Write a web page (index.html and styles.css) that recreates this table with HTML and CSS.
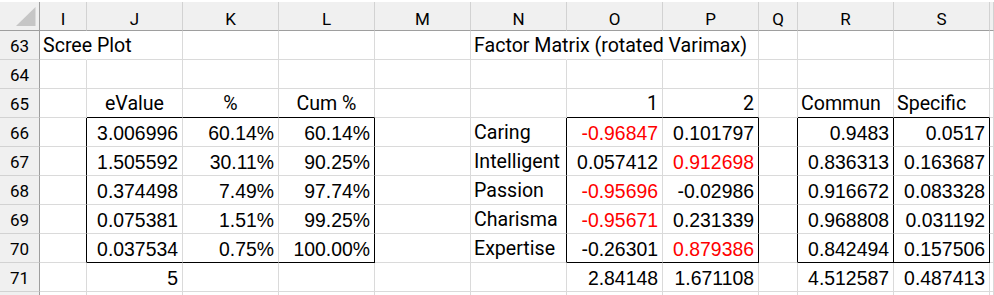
FILE: index.html
```html
<!DOCTYPE html>
<html>
<head>
<meta charset="utf-8">
<link rel="stylesheet" href="styles.css">
</head>
<body>
<div class="sheet">
  <div class="ch corner"><svg class="tri" width="20" height="20" viewBox="0 0 20 20"><polygon points="19.5,0 19.5,19 0,19" fill="#c6c6c6"/></svg></div>
  <div class="ch">I</div><div class="ch">J</div><div class="ch">K</div><div class="ch">L</div><div class="ch">M</div><div class="ch">N</div><div class="ch">O</div><div class="ch">P</div><div class="ch">Q</div><div class="ch">R</div><div class="ch">S</div><div class="ch"></div>

  <div class="rh">63</div>
  <div class="c lbl nr">Scree Plot</div><div class="c"></div><div class="c"></div><div class="c"></div><div class="c"></div>
  <div class="c lbl nr">Factor Matrix (rotated Varimax)</div><div class="c nr"></div><div class="c"></div><div class="c"></div><div class="c"></div><div class="c"></div><div class="c"></div>

  <div class="rh">64</div>
  <div class="c"></div><div class="c"></div><div class="c"></div><div class="c"></div><div class="c"></div><div class="c"></div><div class="c"></div><div class="c"></div><div class="c"></div><div class="c"></div><div class="c"></div><div class="c"></div>

  <div class="rh">65</div>
  <div class="c"></div><div class="c lbl ctr bB">eValue</div><div class="c lbl ctr bB">%</div><div class="c lbl ctr bB">Cum %</div><div class="c"></div><div class="c"></div>
  <div class="c lbl rt bB">1</div><div class="c lbl rt bB">2</div><div class="c"></div><div class="c lbl bB">Commun</div><div class="c lbl bB">Specific</div><div class="c"></div>

  <div class="rh">66</div>
  <div class="c bR"></div><div class="c num">3.006996</div><div class="c num">60.14%</div><div class="c num bR">60.14%</div><div class="c"></div>
  <div class="c lbl bR">Caring</div><div class="c num red">-0.96847</div><div class="c num bR">0.101797</div><div class="c bR"></div><div class="c num bR">0.9483</div><div class="c num bR">0.0517</div><div class="c"></div>

  <div class="rh">67</div>
  <div class="c bR"></div><div class="c num">1.505592</div><div class="c num">30.11%</div><div class="c num bR">90.25%</div><div class="c"></div>
  <div class="c lbl bR">Intelligent</div><div class="c num">0.057412</div><div class="c num red bR">0.912698</div><div class="c bR"></div><div class="c num bR">0.836313</div><div class="c num bR">0.163687</div><div class="c"></div>

  <div class="rh">68</div>
  <div class="c bR"></div><div class="c num">0.374498</div><div class="c num">7.49%</div><div class="c num bR">97.74%</div><div class="c"></div>
  <div class="c lbl bR">Passion</div><div class="c num red">-0.95696</div><div class="c num bR">-0.02986</div><div class="c bR"></div><div class="c num bR">0.916672</div><div class="c num bR">0.083328</div><div class="c"></div>

  <div class="rh">69</div>
  <div class="c bR"></div><div class="c num">0.075381</div><div class="c num">1.51%</div><div class="c num bR">99.25%</div><div class="c"></div>
  <div class="c lbl bR">Charisma</div><div class="c num red">-0.95671</div><div class="c num bR">0.231339</div><div class="c bR"></div><div class="c num bR">0.968808</div><div class="c num bR">0.031192</div><div class="c"></div>

  <div class="rh">70</div>
  <div class="c bR"></div><div class="c num bB">0.037534</div><div class="c num bB">0.75%</div><div class="c num bR bB">100.00%</div><div class="c"></div>
  <div class="c lbl bR">Expertise</div><div class="c num bB">-0.26301</div><div class="c num red bR bB">0.879386</div><div class="c bR"></div><div class="c num bR bB">0.842494</div><div class="c num bR bB">0.157506</div><div class="c"></div>

  <div class="rh">71</div>
  <div class="c"></div><div class="c num">5</div><div class="c"></div><div class="c"></div><div class="c"></div><div class="c"></div>
  <div class="c num">2.84148</div><div class="c num">1.671108</div><div class="c"></div><div class="c num">4.512587</div><div class="c num">0.487413</div><div class="c"></div>

  <div class="rh"></div>
  <div class="c"></div><div class="c"></div><div class="c"></div><div class="c"></div><div class="c"></div><div class="c"></div><div class="c"></div><div class="c"></div><div class="c"></div><div class="c"></div><div class="c"></div><div class="c"></div>
</div>
</body>
</html>
```

FILE: styles.css
```css
html, body {
  margin: 0;
  padding: 0;
  background: #ffffff;
  overflow: hidden;
}
body {
  padding-top: 2px;
  width: 994px;
  height: 293px;
}
.sheet {
  display: grid;
  grid-template-columns: 40px 47px 96px 96px 96px 96px 96px 96px 96px 39px 96px 96px 1fr;
  grid-template-rows: repeat(10, 29px) 3px;
  height: 293px;
  overflow: hidden;
  color: #000;
}
.sheet > div {
  box-sizing: border-box;
  display: flex;
  align-items: flex-end;
  white-space: nowrap;
  min-width: 0;
  min-height: 0;
}
.ch {
  background: #f0f0f0;
  border-right: 1px solid #d2d2d2;
  border-bottom: 1px solid #9e9e9e;
  justify-content: center;
  font-family: Roboto, "Liberation Sans", sans-serif;
  font-size: 17px;
  line-height: 1;
  padding-bottom: 2px;
}
.corner {
  position: relative;
  border-right-color: #9e9e9e;
}
.tri {
  position: absolute;
  left: 16px;
  top: 5px;
}
.rh {
  background: #f0f0f0;
  border-right: 1px solid #9e9e9e;
  border-bottom: 1px solid #d2d2d2;
  justify-content: center;
  font-family: Roboto, "Liberation Sans", sans-serif;
  font-size: 17px;
  line-height: 1;
  padding-bottom: 4px;
}
.c {
  border-right: 1px solid #dadada;
  border-bottom: 1px solid #dadada;
  line-height: 1;
  padding-bottom: 3px;
}
.lbl {
  font-family: Roboto, "Liberation Sans", sans-serif;
  font-size: 19.6px;
  padding-left: 3px;
  padding-right: 4px;
}
.num {
  font-family: "Liberation Sans", Arial, sans-serif;
  font-size: 19.4px;
  justify-content: flex-end;
  padding-right: 4px;
}
.ctr {
  justify-content: center;
  padding-left: 0;
  padding-right: 0;
}
.rt {
  justify-content: flex-end;
}
.red {
  color: #ff0000;
}
.nr {
  border-right-color: transparent;
  overflow: visible;
}
.bR {
  border-right-color: #000;
}
.bB {
  border-bottom-color: #000;
}
```
